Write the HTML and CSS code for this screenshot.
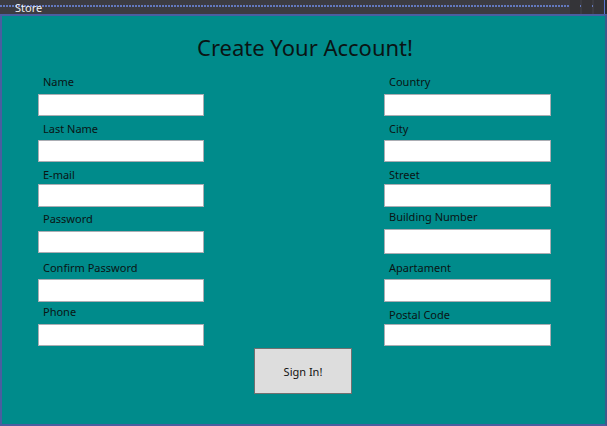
FILE: index.html
```html
<!DOCTYPE html>
<html>
<head>
<meta charset="utf-8">
<title>Store</title>
<link rel="stylesheet" href="styles.css">
</head>
<body>
<div class="window">
  <div class="titlebar">
    <span class="title-text">Store</span>
    <div class="win-buttons">
      <span class="win-btn"></span>
      <span class="win-btn"></span>
      <span class="win-btn"></span>
    </div>
  </div>
  <div class="content">
    <h1 class="heading">Create Your Account!</h1>
    <div class="columns">
      <div class="col col-left">
        <div class="field"><label>Name</label><input type="text"></div>
        <div class="field"><label>Last Name</label><input type="text"></div>
        <div class="field"><label>E-mail</label><input type="text"></div>
        <div class="field"><label>Password</label><input type="password"></div>
        <div class="field"><label>Confirm Password</label><input type="password"></div>
        <div class="field"><label>Phone</label><input type="text"></div>
      </div>
      <div class="col col-right">
        <div class="field"><label>Country</label><input type="text"></div>
        <div class="field"><label>City</label><input type="text"></div>
        <div class="field"><label>Street</label><input type="text"></div>
        <div class="field"><label>Building Number</label><input type="text"></div>
        <div class="field"><label>Apartament</label><input type="text"></div>
        <div class="field"><label>Postal Code</label><input type="text"></div>
      </div>
    </div>
    <div class="actions">
      <button class="signin">Sign In!</button>
    </div>
  </div>
</div>
</body>
</html>
```

FILE: styles.css
```css
html, body {
  margin: 0;
  padding: 0;
  background: #2b2b30;
}

body {
  width: 607px;
  height: 426px;
  overflow: hidden;
  font-family: "Noto Sans", "Open Sans", sans-serif;
}

.window {
  display: flex;
  flex-direction: column;
  width: 607px;
  height: 426px;
}

.titlebar {
  position: relative;
  height: 14px;
  flex: none;
  background-color: #3c3c42;
  background-image: repeating-linear-gradient(90deg, #6379bf 0 2px, transparent 2px 3px);
  background-size: 604px 2px;
  background-position: 0 5px;
  background-repeat: no-repeat;
  border-right: 1px solid #5b78d0;
  margin-right: 2px;
}

.title-text {
  display: block;
  padding-left: 15px;
  padding-top: 2px;
  font-size: 11px;
  line-height: 12px;
  color: #f0f0f0;
}

.win-buttons {
  position: absolute;
  right: 0;
  top: 0;
  display: flex;
  gap: 2px;
}

.win-btn {
  width: 10px;
  height: 14px;
  background: #343438;
}

.content {
  flex: 1;
  display: flex;
  flex-direction: column;
  background: #008b8b;
  border-top: 2px solid #4a5ea0;
  border-left: 2px solid #4a5ea0;
  border-right: 2px solid #3d5a8a;
  border-bottom: 2px solid #4a5ea0;
}

.heading {
  margin: 0;
  height: 58px;
  font-weight: normal;
  font-size: 22px;
  line-height: 34px;
  text-align: center;
  color: #0a1414;
  box-sizing: border-box;
  padding-top: 14px;
  padding-left: 3px;
}

.columns {
  display: flex;
  padding-left: 36px;
}

.col {
  display: flex;
  flex-direction: column;
}

.col-left {
  width: 166px;
}

.col-right {
  width: 167px;
  margin-left: 180px;
}

.field {
  display: flex;
  flex-direction: column;
}

.field label {
  display: block;
  height: 20px;
  padding-left: 5px;
  font-size: 11px;
  line-height: 16px;
  color: #0a1414;
}

.field input {
  display: block;
  box-sizing: border-box;
  width: 100%;
  height: 22px;
  margin: 0;
  padding: 0 4px;
  border: 1px solid #abadb3;
  background: #ffffff;
  outline: none;
}

/* left column rhythm */
.col-left .field:nth-child(2) { margin-top: 5px; }
.col-left .field:nth-child(2) label { height: 19px; }
.col-left .field:nth-child(3) { margin-top: 5px; }
.col-left .field:nth-child(3) label { height: 17px; }
.col-left .field:nth-child(3) input { height: 23px; }
.col-left .field:nth-child(4) { margin-top: 4px; }
.col-left .field:nth-child(5) { margin-top: 7px; }
.col-left .field:nth-child(5) label { height: 19px; }
.col-left .field:nth-child(5) input { height: 23px; }
.col-left .field:nth-child(6) { margin-top: 2px; }

/* right column rhythm */
.col-right .field:nth-child(2) { margin-top: 5px; }
.col-right .field:nth-child(2) label { height: 19px; }
.col-right .field:nth-child(3) { margin-top: 5px; }
.col-right .field:nth-child(3) label { height: 17px; }
.col-right .field:nth-child(3) input { height: 23px; }
.col-right .field:nth-child(4) { margin-top: 2px; }
.col-right .field:nth-child(4) input { height: 25px; }
.col-right .field:nth-child(5) { margin-top: 6px; }
.col-right .field:nth-child(5) label { height: 19px; }
.col-right .field:nth-child(5) input { height: 23px; }
.col-right .field:nth-child(6) { margin-top: 5px; }
.col-right .field:nth-child(6) label { height: 17px; }

.actions {
  display: flex;
  justify-content: center;
  padding-top: 2px;
  padding-right: 1px;
}

.signin {
  width: 98px;
  height: 46px;
  margin: 0;
  padding: 0;
  border: 1px solid #707070;
  background: #dddddd;
  font-family: "Noto Sans", "Open Sans", sans-serif;
  font-size: 11px;
  color: #101010;
}
```
